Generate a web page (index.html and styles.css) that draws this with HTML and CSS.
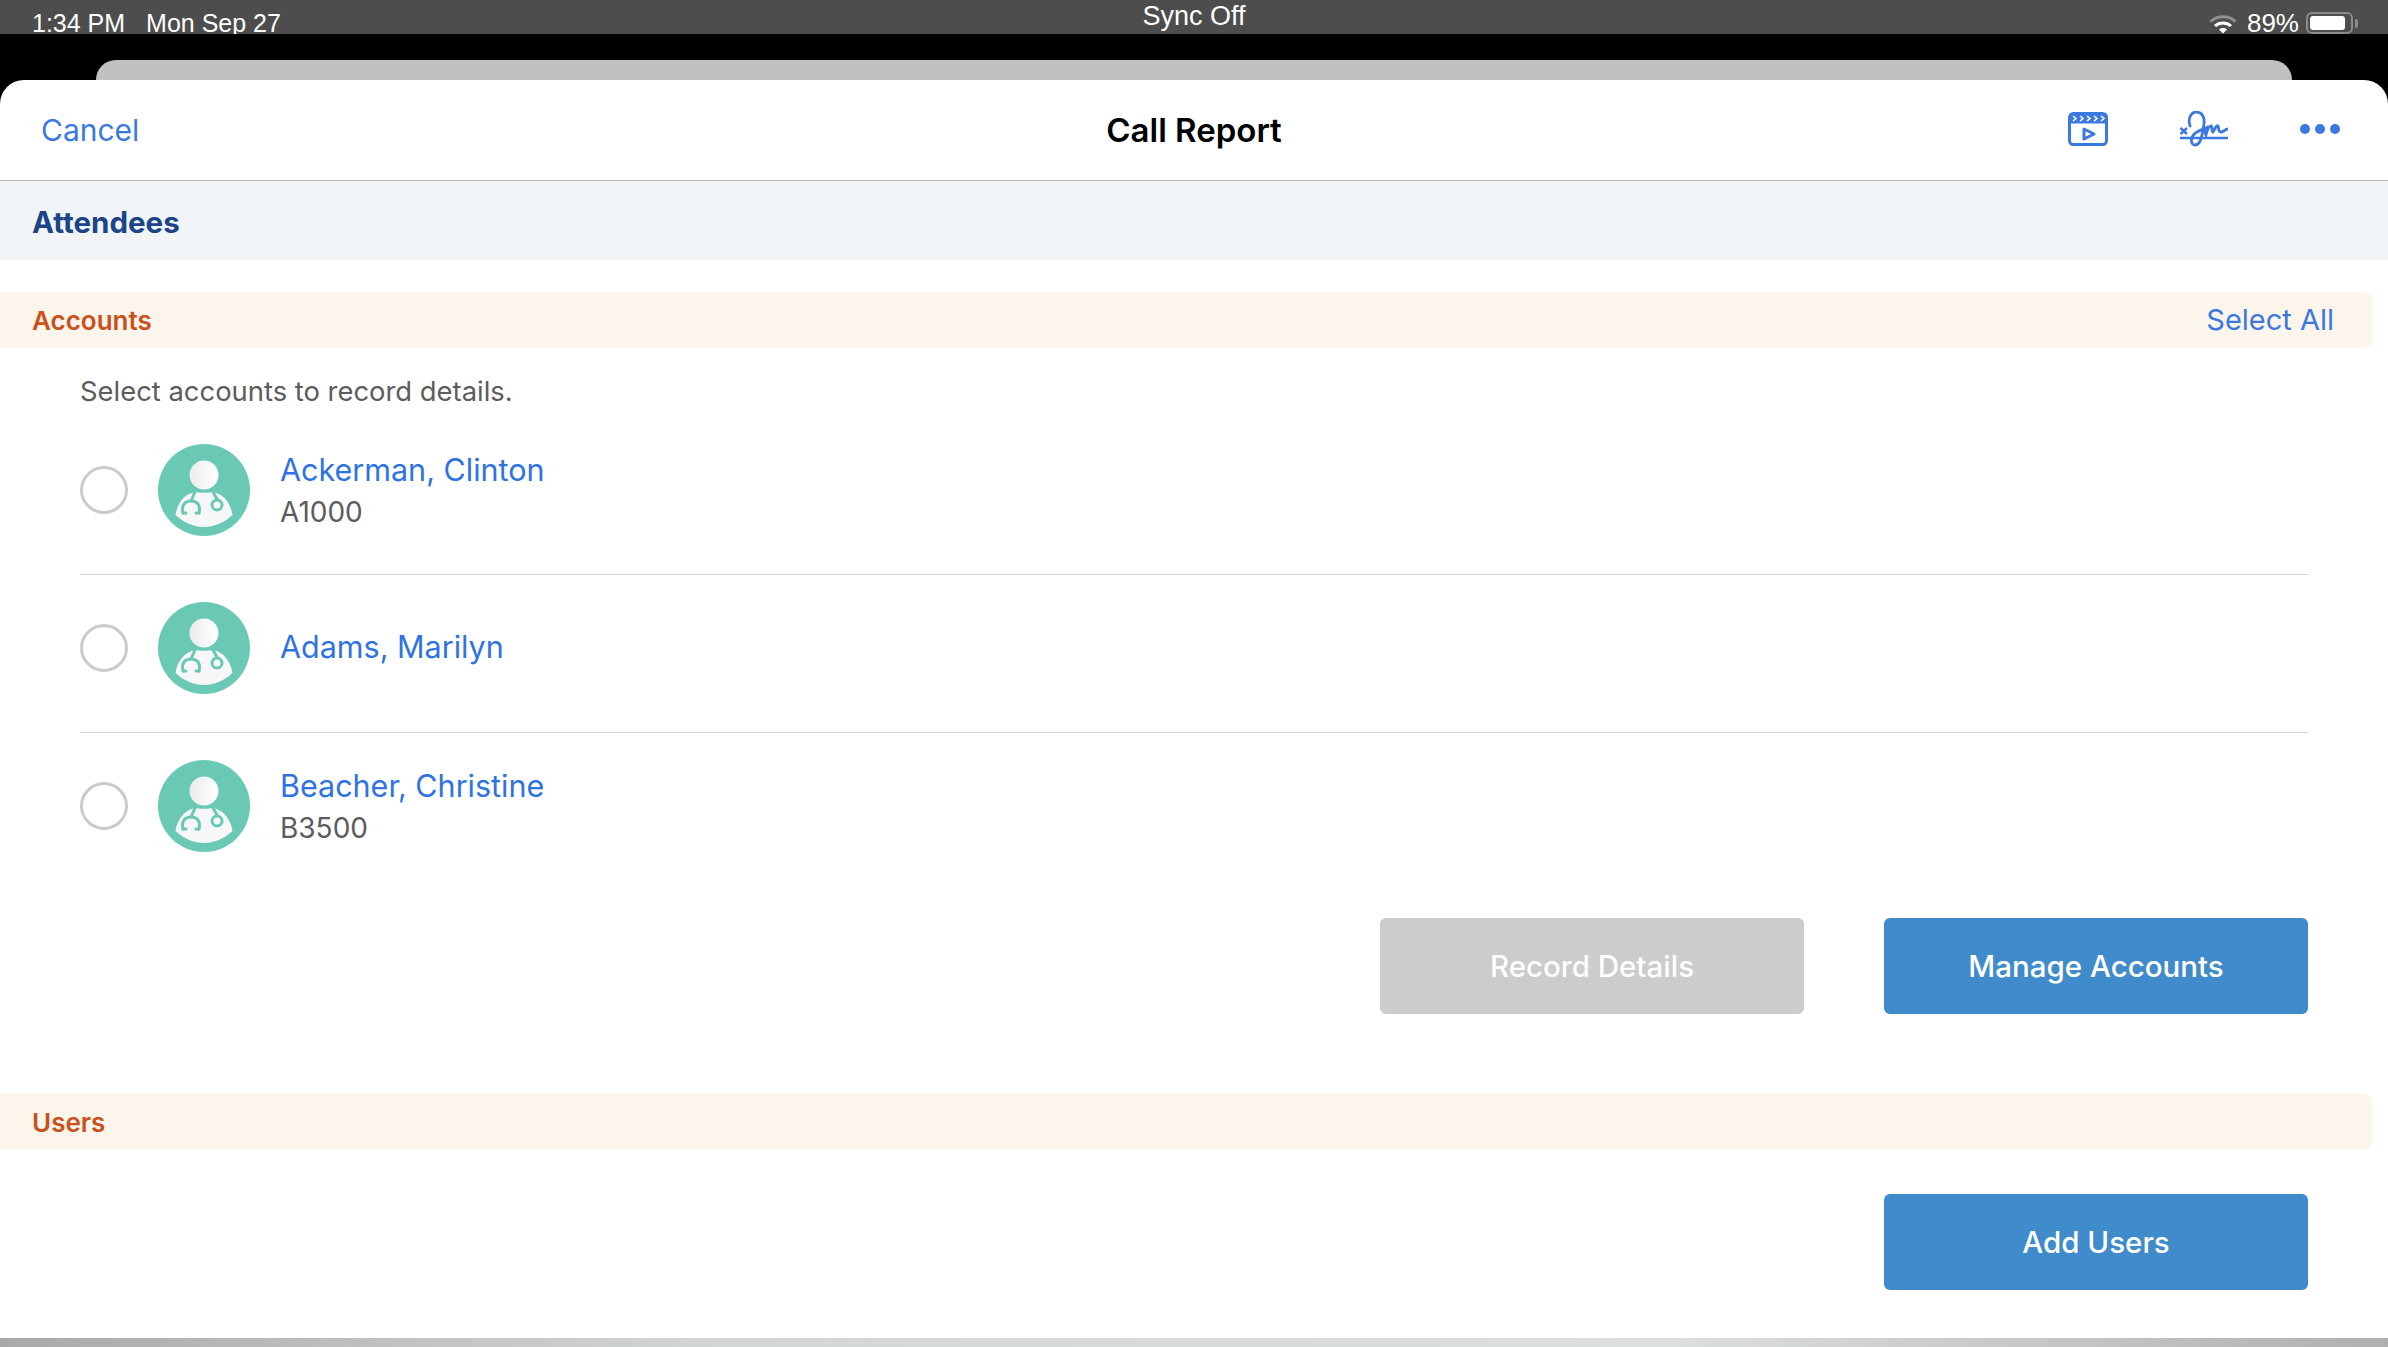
FILE: index.html
```html
<!DOCTYPE html>
<html lang="en">
<head>
    <meta charset="UTF-8">
    <title>Call Report</title>
    <link rel="stylesheet" href="styles.css">
</head>
<body>

<svg class="defs" width="0" height="0">
    <defs>
        <linearGradient id="headShade" x1="0" x2="1" y1="0" y2="0">
            <stop offset="0" stop-color="#ececec"/>
            <stop offset="1" stop-color="#ffffff"/>
        </linearGradient>
        <symbol id="doctor" viewBox="-46 -46 92 92">
            <circle r="46" fill="#69c9b5"/>
            <circle cx="0" cy="-15" r="14.5" fill="url(#headShade)"/>
            <path d="M-9 2 C-20 4 -27 14 -28.5 25 C-20 33 -10 37 0 37 C10 37 20 33 28.5 25 C27 14 20 4 9 2 C6 3 -6 3 -9 2 Z" fill="#f7f7f7"/>
            <g fill="none" stroke="#69c9b5" stroke-width="3" stroke-linecap="round">
                <path d="M-9 2 L-13 11"/>
                <path d="M-21 23 C-23 15 -19 11 -13 11 C-7 11 -3 15 -5 23"/>
                <path d="M-21 23 L-18 23 M-5 23 L-8 23"/>
                <path d="M9 2 L13 9"/>
                <circle cx="13" cy="15" r="5"/>
            </g>
        </symbol>
    </defs>
</svg>

<div class="status-bar">
    <div class="status-left"><span>1:34 PM</span><span>Mon Sep 27</span></div>
    <div class="status-mid">Sync Off</div>
    <div class="status-right">
        <svg class="wifi" width="28" height="20" viewBox="0 0 28 20">
            <path d="M1.5 7.5 C8.5 1 19.5 1 26.5 7.5" fill="none" stroke="#8f8f8f" stroke-width="3"/>
            <path d="M6 12 C10.5 8 17.5 8 22 12" fill="none" stroke="#fff" stroke-width="3"/>
            <path d="M10 15.5 C12.5 13.6 15.5 13.6 18 15.5 L14 19.5 Z" fill="#fff"/>
        </svg>
        <span class="batt-pct">89%</span>
        <div class="battery"><div class="battery-fill"></div></div>
        <div class="battery-nub"></div>
    </div>
</div>

<div class="backdrop">
    <div class="back-card"></div>
</div>

<div class="sheet">
    <div class="nav-bar">
        <a class="cancel">Cancel</a>
        <div class="nav-title">Call Report</div>
        <div class="nav-icons">
            <svg width="40" height="34" viewBox="0 0 40 34">
                <rect x="1.5" y="1.5" width="37" height="31" rx="4" fill="#fff" stroke="#3b78e0" stroke-width="3"/>
                <rect x="1.5" y="1.5" width="37" height="10" fill="#3b78e0"/>
                <path d="M5 4 L8 6.5 L5 9 M12 4 L15 6.5 L12 9 M19 4 L22 6.5 L19 9 M26 4 L29 6.5 L26 9 M33 4 L36 6.5 L33 9" fill="none" stroke="#fff" stroke-width="1.6"/>
                <path d="M16 17 L26 22 L16 27 Z" fill="none" stroke="#3b78e0" stroke-width="3" stroke-linejoin="round"/>
            </svg>
            <svg width="48" height="36" viewBox="0 0 48 36" fill="none" stroke="#3b78e0">
                <path d="M0 27 H48" stroke-width="2.4"/>
                <path d="M0.5 17 L7 23 M7 17 L0.5 23" stroke-width="2.4"/>
                <path d="M10 15 C7 5 13 0.5 17 1 C24 2 25 9 23.5 16 C22 24 21 34 15 34 C10 34 10 25 17 21 C20 19 24 18 26 17 C25 20 25 22 26 24 C27 20 29 15 31 15 C33 15 31 21 33 21 C35 17 37 14 38 15 C39 17 38 21 41 21 C43 21 45 19 47 18" stroke-width="2.8" stroke-linecap="round"/>
            </svg>
            <svg width="40" height="10" viewBox="0 0 40 10">
                <circle cx="5" cy="5" r="5" fill="#3b78e0"/>
                <circle cx="20" cy="5" r="5" fill="#3b78e0"/>
                <circle cx="35" cy="5" r="5" fill="#3b78e0"/>
            </svg>
        </div>
    </div>

    <div class="section-title">Attendees</div>

    <div class="band band-accounts">
        <span class="band-label">Accounts</span>
        <a class="select-all">Select All</a>
    </div>

    <div class="accounts">
        <div class="hint">Select accounts to record details.</div>

        <div class="row">
            <span class="radio"></span>
            <svg class="avatar"><use href="#doctor"/></svg>
            <div class="row-text">
                <div class="name">Ackerman, Clinton</div>
                <div class="code">A1000</div>
            </div>
        </div>
        <div class="row">
            <span class="radio"></span>
            <svg class="avatar"><use href="#doctor"/></svg>
            <div class="row-text row-text-single">
                <div class="name">Adams, Marilyn</div>
            </div>
        </div>
        <div class="row row-last">
            <span class="radio"></span>
            <svg class="avatar"><use href="#doctor"/></svg>
            <div class="row-text">
                <div class="name">Beacher, Christine</div>
                <div class="code">B3500</div>
            </div>
        </div>

        <div class="actions">
            <button class="btn btn-disabled">Record Details</button>
            <button class="btn">Manage Accounts</button>
        </div>
    </div>

    <div class="band band-users">
        <span class="band-label">Users</span>
    </div>

    <div class="actions actions-users">
        <button class="btn">Add Users</button>
    </div>
</div>

<div class="bottom-edge"></div>

</body>
</html>
```

FILE: styles.css
```css
html, body {
    margin: 0;
    padding: 0;
    height: 1347px;
    overflow: hidden;
}
body {
    font-family: Inter, "Noto Sans", sans-serif;
    background-color: #000;
    display: flex;
    flex-direction: column;
}
.defs {
    display: block;
    flex: none;
}
.status-bar {
    height: 34px;
    flex: none;
    background-color: #4d4d4d;
    color: #fff;
    display: grid;
    grid-template-columns: 1fr auto 1fr;
    font-size: 25px;
    font-family: "Liberation Sans", sans-serif;
}
.status-left {
    padding: 12px 0 0 32px;
    display: flex;
    gap: 21px;
    line-height: 22px;
}
.status-mid {
    line-height: 33px;
    font-size: 27px;
}
.status-right {
    display: flex;
    justify-content: flex-end;
    align-items: flex-start;
    padding: 12px 30px 0 0;
}
.wifi {
    margin: 2px 10px 0 0;
}
.batt-pct {
    font-size: 26px;
    line-height: 22px;
    margin-right: 7px;
}
.battery {
    width: 47px;
    height: 22px;
    box-sizing: border-box;
    border: 2px solid #8c8c8c;
    border-radius: 6px;
    padding: 2px;
}
.battery-fill {
    width: 89%;
    height: 100%;
    background-color: #fff;
    border-radius: 3px;
}
.battery-nub {
    width: 3px;
    height: 9px;
    margin: 7px 0 0 2px;
    background-color: #8c8c8c;
    border-radius: 0 2px 2px 0;
}
/* sits above the status bar so the descenders stop at its edge */
.backdrop {
    position: relative;
    flex: none;
    padding: 26px 96px 0 96px;
    background-color: #000;
}
.back-card {
    height: 20px;
    background-color: #c1c1c1;
    border-radius: 20px 20px 0 0;
}
.sheet {
    flex: 1;
    background-color: #fff;
    border-radius: 24px 24px 0 0;
}
.nav-bar {
    height: 100px;
    border-bottom: 1px solid #b3b3b3;
    display: grid;
    grid-template-columns: 1fr auto 1fr;
    align-items: center;
}
.cancel {
    padding-left: 41px;
    color: #3b78e0;
    font-size: 30px;
    cursor: pointer;
}
.nav-title {
    font-size: 33px;
    font-weight: 600;
    color: #000;
}
.nav-icons {
    display: flex;
    justify-content: flex-end;
    align-items: center;
    padding: 0 48px 3px 0;
    gap: 72px;
}
.section-title {
    height: 79px;
    line-height: 82px;
    padding-left: 32px;
    background-color: #f1f5f8;
    color: #1c4587;
    font-size: 29.5px;
    font-weight: 700;
}
.band {
    height: 56px;
    margin-right: 16px;
    padding: 0 38px 0 32px;
    display: flex;
    justify-content: space-between;
    align-items: center;
    background-color: #fbf5ec;
    border-radius: 0 8px 8px 0;
}
.band-accounts {
    margin-top: 32px;
}
.band-label {
    color: #c9521c;
    font-size: 26px;
    font-weight: 600;
}
.select-all {
    color: #3b78e0;
    font-size: 29px;
    line-height: 56px;
    margin-top: -1px;
    cursor: pointer;
}
.accounts {
    padding: 0 80px;
}
.hint {
    height: 69px;
    line-height: 86px;
    color: #5c5c5c;
    font-size: 27.4px;
}
.row {
    height: 157px;
    border-bottom: 1px solid #d5d5d5;
    display: flex;
    align-items: flex-start;
}
.row-last {
    border-bottom: none;
}
.radio {
    width: 48px;
    height: 48px;
    box-sizing: border-box;
    margin: 49px 30px 0 0;
    border: 3px solid #cbcbcb;
    border-radius: 50%;
}
.avatar {
    width: 92px;
    height: 92px;
    margin: 27px 30px 0 0;
}
.row-text {
    height: 92px;
    margin-top: 28px;
    display: flex;
    flex-direction: column;
    justify-content: center;
}
.row-text-single {
    margin-top: 25px;
}
.name {
    color: #2f73e2;
    font-size: 30.5px;
    line-height: 43px;
}
.code {
    color: #5c5c5c;
    font-size: 28px;
    line-height: 43px;
}
.actions {
    display: flex;
    justify-content: flex-end;
    gap: 80px;
    margin-top: 28px;
}
.actions-users {
    margin-top: 44px;
    padding-right: 80px;
}
.btn {
    width: 424px;
    height: 96px;
    border: none;
    border-radius: 6px;
    background-color: #3f8bcb;
    color: #fff;
    font-family: inherit;
    font-size: 29.5px;
    font-weight: 500;
    cursor: pointer;
}
.btn-disabled {
    background-color: #cccccc;
}
.band-users {
    margin-top: 80px;
}
.bottom-edge {
    height: 9px;
    flex: none;
    background: linear-gradient(to right, #a9a9a9, #d3d6d6 30%, #dcdfdf 70%, #b0b0b0);
}
```
